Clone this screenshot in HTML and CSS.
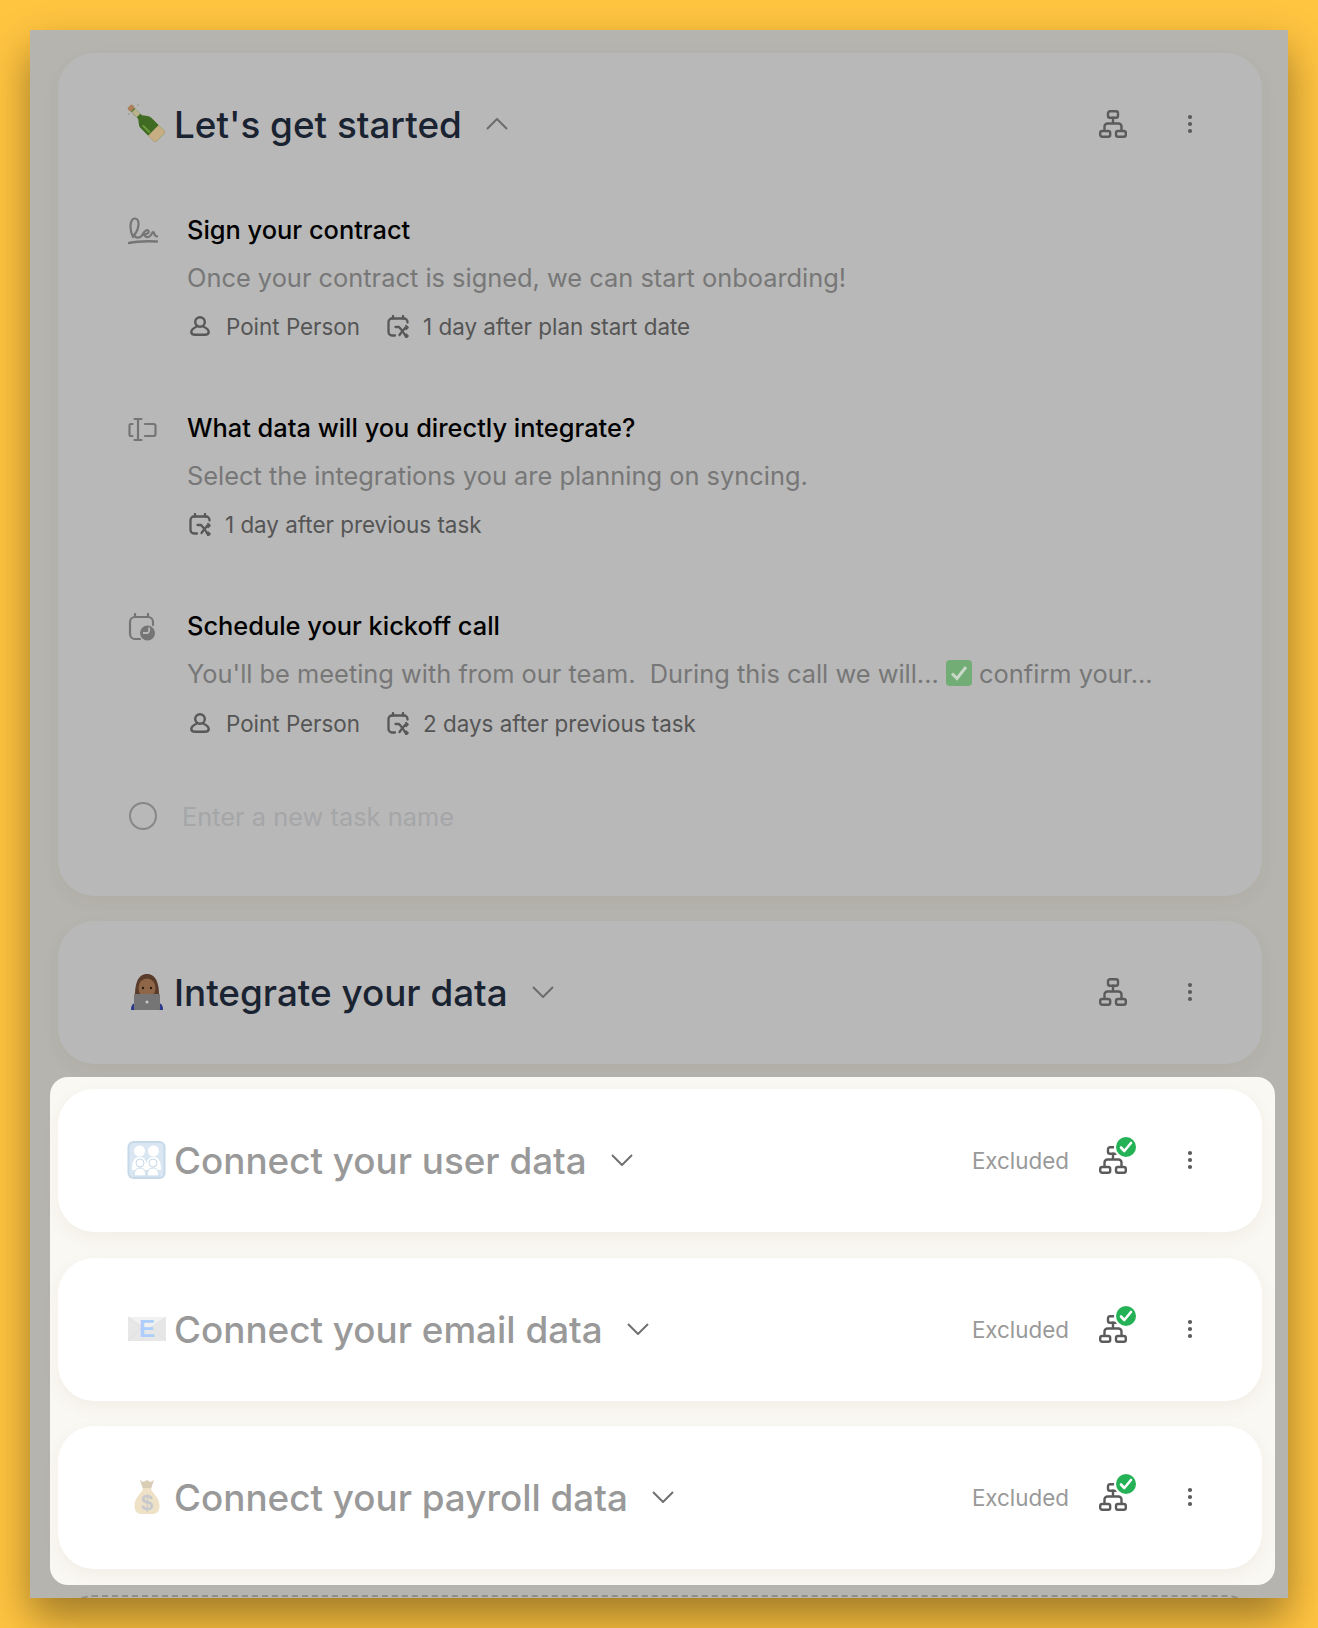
FILE: index.html
```html
<!DOCTYPE html>
<html lang="en">
<head>
<meta charset="utf-8">
<title>Onboarding plan</title>
<link rel="stylesheet" href="styles.css">
</head>
<body>
<svg class="defs" aria-hidden="true">
  <symbol id="net" viewBox="0 0 28 28">
    <g fill="none" stroke="currentColor" stroke-width="2.4" stroke-linecap="round" stroke-linejoin="round">
      <rect x="9" y="1.200" width="10" height="6.600" rx="2"/>
      <path d="M14 7.800V13.500M5.500 20.500V16.500a3 3 0 0 1 3-3H19.500a3 3 0 0 1 3 3v4"/>
      <rect x="1.200" y="21" width="10" height="5.800" rx="2"/>
      <rect x="17" y="21" width="9.800" height="5.800" rx="2"/>
    </g>
  </symbol>
  <symbol id="dots" viewBox="0 0 6 20">
    <circle cx="3" cy="3" r="2.100" fill="currentColor"/>
    <circle cx="3" cy="10" r="2.100" fill="currentColor"/>
    <circle cx="3" cy="17" r="2.100" fill="currentColor"/>
  </symbol>
  <symbol id="person" viewBox="0 0 20 20">
    <g fill="none" stroke="currentColor" stroke-width="2.400">
      <circle cx="10" cy="6" r="4.800"/>
      <path d="M7 10.500C3.500 12 1.300 14 1.300 16c0 1.900 1.800 2.800 4 2.800h9.400c2.200 0 4-.9 4-2.800 0-2-2.200-4-5.700-5.500"/>
    </g>
  </symbol>
  <symbol id="cal" viewBox="0 0 22 23">
    <g fill="none" stroke="currentColor" stroke-width="2.300" stroke-linecap="round" stroke-linejoin="round">
      <path d="M20.500 7.500V7a3.500 3.500 0 0 0-3.500-3.500H5A3.500 3.500 0 0 0 1.500 7v10A3.500 3.500 0 0 0 5 20.500h3"/>
      <path d="M6 1v2.500M16 1v2.500"/>
      <path d="M8.500 12h3.500l3.500 4M15.500 16l-3 4"/>
      <path d="M19 10.800l1.800 1.700-1.800 1.700M19 19.300l1.800 1.700-1.800 1.700" stroke-width="1.900"/>
      <path d="M15.500 16l3-3.500M15.500 16l3 5"/>
    </g>
  </symbol>
  <symbol id="chev-d" viewBox="0 0 22 12">
    <path d="M1 1l10 10L21 1" fill="none" stroke="currentColor" stroke-width="2"/>
  </symbol>
  <symbol id="chev-u" viewBox="0 0 22 12">
    <path d="M1 11L11 1l10 10" fill="none" stroke="currentColor" stroke-width="2"/>
  </symbol>
  <symbol id="ok" viewBox="0 0 24 24">
    <circle cx="12" cy="12" r="10" fill="#25b256"/>
    <path d="M7 12.500l3.300 3.500L17 8" fill="none" stroke="#fff" stroke-width="2.600" stroke-linecap="round" stroke-linejoin="round"/>
  </symbol>
</svg>
<main class="panel">
  <section class="card dim">
    <header class="row">
      <svg class="emoji" viewBox="0 0 38 38" aria-hidden="true">
        <g transform="rotate(-45 19 19)">
          <rect x="15.800" y="-6" width="6.400" height="5" rx="1.500" fill="#ac7f57"/>
          <path d="M16.500 -1h5v9c0 3 5 5 5 10v18a2 2 0 0 1-2 2H13.500a2 2 0 0 1-2-2V18c0-5 5-7 5-10z" fill="#3f6b22"/>
          <path d="M16.500 0h5v7h-5z" fill="#b9b28a"/>
          <path d="M11.500 28h15v8a2 2 0 0 1-2 2h-11a2 2 0 0 1-2-2z" fill="#c6ad82"/>
          <path d="M14 17h2v10h-2z" fill="#6d9a3e"/>
        </g>
        <circle cx="1" cy="9" r=".7" fill="#8a8a7a"/><circle cx="10" cy="0" r=".7" fill="#8a8a7a"/><circle cx="6" cy="10" r=".6" fill="#8a8a7a"/>
      </svg>
      <h2 class="title">Let's get started</h2>
      <svg class="chev"><use href="#chev-u"/></svg>
      <span class="spacer"></span>
      <svg class="net"><use href="#net"/></svg>
      <svg class="dots"><use href="#dots"/></svg>
    </header>
    <ul class="tasks">
      <li class="task">
        <svg class="task-icon" viewBox="0 0 30 28" aria-hidden="true">
          <path d="M5 20C1 12 2 1.500 7 1.500 12.500 1.500 11 13 6 18c2 4 7 3 9-1 1-3 4.500-5 5.500-3 1 2-2.500 3.500-4.500 3 1 4 5 4 7 1 1-2 2-4 3-2 .5 2 1 3.500 3.500 3.500" fill="none" stroke="currentColor" stroke-width="2.200" stroke-linecap="round"/>
          <path d="M1 26C10 24 20 24 29 24.500" fill="none" stroke="currentColor" stroke-width="2.500" stroke-linecap="round"/>
        </svg>
        <div class="task-body">
          <h3 class="task-name">Sign your contract</h3>
          <p class="task-desc">Once your contract is signed, we can start onboarding!</p>
          <div class="meta">
            <span class="meta-item"><svg class="mi-person"><use href="#person"/></svg>Point Person</span>
            <span class="meta-item"><svg class="mi-cal"><use href="#cal"/></svg>1 day after plan start date</span>
          </div>
        </div>
      </li>
      <li class="task">
        <svg class="task-icon" viewBox="0 0 30 28" aria-hidden="true">
          <g fill="none" stroke="currentColor" stroke-width="2.200" stroke-linecap="round">
            <path d="M10 4v21M6.500 4h7M6.500 25h7"/>
            <path d="M4.500 9H3a1.500 1.500 0 0 0-1.500 1.500v9A1.500 1.500 0 0 0 3 21h1.500"/>
            <path d="M17 9h8.500a2 2 0 0 1 2 2v8a2 2 0 0 1-2 2H17"/>
          </g>
        </svg>
        <div class="task-body">
          <h3 class="task-name">What data will you directly integrate?</h3>
          <p class="task-desc">Select the integrations you are planning on syncing.</p>
          <div class="meta">
            <span class="meta-item"><svg class="mi-cal"><use href="#cal"/></svg>1 day after previous task</span>
          </div>
        </div>
      </li>
      <li class="task">
        <svg class="task-icon" viewBox="0 0 30 28" aria-hidden="true">
          <g fill="none" stroke="currentColor" stroke-width="2.200" stroke-linecap="round">
            <path d="M12 26H7a5 5 0 0 1-5-5V9a5 5 0 0 1 5-5h13a5 5 0 0 1 5 5v3"/>
            <path d="M7 1v3M20 1v3"/>
          </g>
          <circle cx="19.500" cy="20" r="7.500" fill="currentColor"/>
          <path d="M21 14.500c.500 3 0 5.500-1.500 5.500h-4.500" fill="none" stroke="#b8b8b8" stroke-width="1.800"/>
        </svg>
        <div class="task-body">
          <h3 class="task-name">Schedule your kickoff call</h3>
          <p class="task-desc">You'll be meeting with from our team. &nbsp;During this call we will... <svg class="tick" viewBox="0 0 26 26" aria-hidden="true"><rect width="26" height="26" rx="4" fill="#72ad75"/><path d="M6 13.500l5 5L20 7" fill="none" stroke="#c9d8c9" stroke-width="3"/></svg> confirm your...</p>
          <div class="meta">
            <span class="meta-item"><svg class="mi-person"><use href="#person"/></svg>Point Person</span>
            <span class="meta-item"><svg class="mi-cal"><use href="#cal"/></svg>2 days after previous task</span>
          </div>
        </div>
      </li>
    </ul>
    <div class="new-task">
      <span class="radio"></span>
      <span class="new-name">Enter a new task name</span>
    </div>
  </section>

  <section class="card dim">
    <header class="row">
      <svg class="emoji" viewBox="0 0 38 38" aria-hidden="true">
        <path d="M3 37c0-4 1-6 4-7h24c3 1 4 3 4 7z" fill="#2b3a8c"/>
        <path d="M7 30C6 10 10 1 19 1s13 9 12 29z" fill="#5a3c2b"/>
        <ellipse cx="19" cy="15" rx="8.500" ry="9.500" fill="#8f6748"/>
        <circle cx="15" cy="15" r="1.200" fill="#2b1c14"/><circle cx="23" cy="15" r="1.200" fill="#2b1c14"/>
        <rect x="6" y="21" width="26" height="16" rx="1" fill="#757575"/>
        <circle cx="19" cy="29" r="1.500" fill="#c9c9c9"/>
      </svg>
      <h2 class="title">Integrate your data</h2>
      <svg class="chev"><use href="#chev-d"/></svg>
      <span class="spacer"></span>
      <svg class="net"><use href="#net"/></svg>
      <svg class="dots"><use href="#dots"/></svg>
    </header>
  </section>

  <div class="spotlight">
    <section class="card">
      <header class="row">
        <svg class="emoji faded" viewBox="0 0 38 38" aria-hidden="true">
          <rect x="-0.500" y="0" width="38" height="38" rx="6" fill="#7aa6cc"/>
          <rect x="1.500" y="2" width="34" height="34" rx="4" fill="#a9c8e4"/>
          <g fill="#fff">
            <circle cx="11.500" cy="10" r="5.500"/><circle cx="25.500" cy="10" r="5.500"/>
            <path d="M4 29c0-9 2-13 7.500-13S19 20 19 29zM18 29c0-9 2-13 7.500-13S33 20 33 29z"/>
          </g>
          <g fill="#fff" stroke="#7aa6cc" stroke-width="1">
            <circle cx="12" cy="22" r="4"/><circle cx="25" cy="22" r="4"/>
            <path d="M6 35c0-5 2-8 6-8s6 3 6 8zM19 35c0-5 2-8 6-8s6 3 6 8z"/>
          </g>
        </svg>
        <h2 class="title muted">Connect your user data</h2>
        <svg class="chev dark"><use href="#chev-d"/></svg>
        <span class="spacer"></span>
        <span class="status">Excluded</span>
        <span class="net-wrap"><svg class="net"><use href="#net"/></svg><svg class="badge"><use href="#ok"/></svg></span>
        <svg class="dots"><use href="#dots"/></svg>
      </header>
    </section>
    <section class="card">
      <header class="row">
        <svg class="emoji faded" viewBox="0 0 38 25" aria-hidden="true">
          <rect x="0" y="0.500" width="38" height="24" fill="#c8c8c8"/>
          <path d="M0 .5l19 13 19-13" fill="#dedede" stroke="#aaa" stroke-width=".6"/>
          <path d="M0 24.500l14-14M38 24.500l-14-14" fill="none" stroke="#aaa" stroke-width=".6"/>
          <text x="19" y="20.500" text-anchor="middle" class="env-e">E</text>
        </svg>
        <h2 class="title muted">Connect your email data</h2>
        <svg class="chev dark"><use href="#chev-d"/></svg>
        <span class="spacer"></span>
        <span class="status">Excluded</span>
        <span class="net-wrap"><svg class="net"><use href="#net"/></svg><svg class="badge"><use href="#ok"/></svg></span>
        <svg class="dots"><use href="#dots"/></svg>
      </header>
    </section>
    <section class="card">
      <header class="row">
        <svg class="emoji faded" viewBox="0 0 38 38" aria-hidden="true">
          <path d="M12 2l3.500 2L19 2l3.500 2L26 2l-3 9h-8z" fill="#a88a50"/>
          <path d="M15.500 10h7c1.500 5 9 9 9 18 0 6-3.500 8-7 8H13.500c-3.500 0-7-2-7-8 0-9 7.500-13 9-18z" fill="#d9b878"/>
          <text x="19" y="32" text-anchor="middle" class="dollar">$</text>
        </svg>
        <h2 class="title muted">Connect your payroll data</h2>
        <svg class="chev dark"><use href="#chev-d"/></svg>
        <span class="spacer"></span>
        <span class="status">Excluded</span>
        <span class="net-wrap"><svg class="net"><use href="#net"/></svg><svg class="badge"><use href="#ok"/></svg></span>
        <svg class="dots"><use href="#dots"/></svg>
      </header>
    </section>
  </div>
  <div class="add-section"></div>
</main>
</body>
</html>
```

FILE: styles.css
```css
* { box-sizing: border-box; }
html, body { margin: 0; padding: 0; }
body {
  width: 1318px;
  height: 1628px;
  overflow: hidden;
  padding: 30px;
  background: #ffc440;
  font-family: Inter, "Liberation Sans", sans-serif;
}
.defs { display: block; width: 0; height: 0; }
.panel {
  height: 1568px;
  padding: 23px 26px 0 28px;
  display: flex;
  flex-direction: column;
  gap: 25px;
  overflow: hidden;
  background: #b5b4ae;
  box-shadow: 0 20px 40px rgba(0, 0, 0, .38);
}
.card {
  flex: none;
  border-radius: 36px;
  background: #fff;
  box-shadow: 0 6px 18px rgba(70, 55, 20, .05);
}
.card.dim { background: #b8b8b8; }
.row {
  height: 143px;
  padding: 0 69px 1px 70px;
  display: flex;
  align-items: center;
}
.emoji { width: 38px; height: 38px; flex: none; margin-right: 8px; overflow: visible; }
.emoji.faded { opacity: .42; }
.title {
  margin: 2px 0 0;
  font-size: 36.85px;
  line-height: 44px;
  font-weight: 500;
  color: #1a2331;
}
.title.muted { color: #999; }
.chev { width: 22px; height: 12px; margin-left: 24px; flex: none; color: #6c6c6c; }
.chev.dark { color: #707070; }
.spacer { flex: 1; }
.status { font-size: 22.4px; color: #999; margin: 1px 30px 0 0; }
.net { width: 28px; height: 28px; display: block; color: #5b5b5b; flex: none; }
.net-wrap { position: relative; display: block; flex: none; }
.badge {
  position: absolute;
  top: -11px;
  left: 15px;
  width: 24px;
  height: 24px;
  border-radius: 50%;
  background: #fff;
}
.dots { width: 6px; height: 20px; margin-left: 60px; color: #5b5b5b; flex: none; }
.tasks { list-style: none; margin: 0; padding: 10px 70px 0; display: flex; flex-direction: column; gap: 53px; }
.task { display: flex; }
.task-icon { width: 30px; height: 28px; margin-top: 11px; flex: none; color: #757575; }
.task-body { margin-left: 29px; min-width: 0; }
.task-name { margin: 0; font-size: 25.4px; line-height: 48px; font-weight: 500; color: #000; }
.task-desc { margin: 0; font-size: 25.4px; line-height: 48px; font-weight: 400; color: #777; white-space: nowrap; }
.tick { width: 26px; height: 26px; vertical-align: -3px; }
.meta { display: flex; gap: 25px; height: 49px; padding-bottom: 1px; align-items: center; font-size: 22.4px; color: #555; }
.task:last-child .meta { padding: 1px 0 0; }
.meta-item { display: flex; align-items: center; }
.mi-person { width: 20px; height: 20px; margin: 0 16px 0 3px; color: #585858; }
.mi-cal { width: 22px; height: 23px; margin: 0 14px 0 2px; color: #585858; }
.new-task { margin: 42px 0 53px 71px; height: 54px; display: flex; align-items: center; }
.radio { width: 28px; height: 28px; border: 2.5px solid #878787; border-radius: 50%; }
.new-name { margin-left: 25px; font-size: 25.4px; color: #a5a6a8; }
.spotlight {
  flex: none;
  margin: -12px -13px -16px -8.5px;
  padding: 12px 13px 16px 8.5px;
  display: flex;
  flex-direction: column;
  gap: 25.5px;
  border-radius: 18px;
  background: #faf8f2;
  position: relative;
}
.add-section { flex: none; height: 120px; margin: 1px 10px 0; border: 2px dashed #8f8f8c; border-radius: 24px; }
.dollar { font-family: "Liberation Sans", sans-serif; font-size: 22px; font-weight: 700; fill: #7a7f8c; }
.env-e { font-family: "Liberation Sans", sans-serif; font-size: 24px; font-weight: 700; fill: #3d8cf5; }
```
